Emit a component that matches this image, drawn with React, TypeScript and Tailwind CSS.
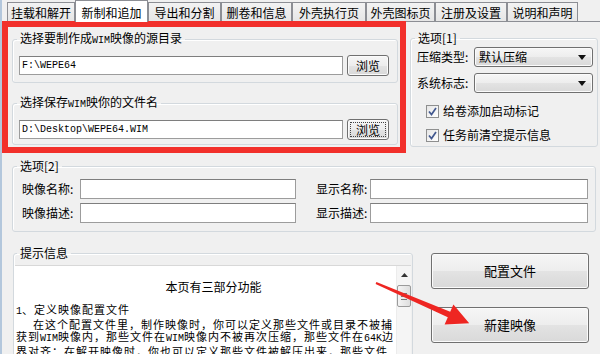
import React from "react";

const tabs = [
  { label: "挂载和解开", w: "w-[68px]" },
  { label: "新制和追加", w: "w-[73px]", active: true },
  { label: "导出和分割", w: "w-[73px]" },
  { label: "删卷和信息", w: "w-[71px]" },
  { label: "外壳执行页", w: "w-[74px]" },
  { label: "外壳图标页", w: "w-[69px]" },
  { label: "注册及设置", w: "w-[72px]" },
  { label: "说明和声明", w: "w-[71px]" },
];

const face =
  "rounded-[3px] border border-[#707070] shadow-[inset_0_0_0_1px_#fbfbfb] bg-[linear-gradient(to_bottom,#f6f6f6_0%,#ededed_50%,#e3e3e3_51%,#d9d9d9_100%)]";
const btn = `flex items-center justify-center ${face}`;

const input =
  "flex items-center bg-white border border-[#9c9c9c] border-t-[#7e7e7e] pl-[2px] font-['Liberation_Mono',monospace] text-[10px]";

const group = "border border-[#d3d9de] rounded-[3px] shadow-[inset_1px_1px_0_#ffffff]";

// narrow latin runs, like the bitmap font in the original
function W({ children }: { children: React.ReactNode }) {
  return <span className="font-['Liberation_Mono',monospace] text-[10px] tracking-normal">{children}</span>;
}

function Caret() {
  return (
    <svg width="8" height="5" viewBox="0 0 8 5">
      <path d="M0 0 H8 L4 5 Z" fill="#111" />
    </svg>
  );
}

function Combo({ label, value }: { label: string; value?: string }) {
  return (
    <div className="flex items-center pl-[6px]">
      <span className="w-[57px]">{label}</span>
      <div className={`${face} flex h-[20px] w-[119px] items-center justify-between pl-[4px] pr-[6px]`}>
        <span>{value}</span>
        <Caret />
      </div>
    </div>
  );
}

function Check({ label }: { label: string }) {
  return (
    <div className="flex items-center gap-[4px] pl-[15px]">
      <div className="flex h-[13px] w-[13px] items-center justify-center border border-[#8e8f8f] bg-[linear-gradient(135deg,#e6e6e6,#ffffff)]">
        <svg width="11" height="11" viewBox="0 0 11 11">
          <path d="M2 5.5 L4.5 8.5 L9 2" fill="none" stroke="#42588f" strokeWidth="1.7" />
        </svg>
      </div>
      <span>{label}</span>
    </div>
  );
}

function PathRow({ value, focused }: { value: string; focused?: boolean }) {
  return (
    <div className="mt-[6px] flex items-center gap-[4px] pl-[6px]">
      <div className={`${input} h-[19px] w-[324px]`}>{value}</div>
      <div className={`${btn} h-[21px] w-[42px] ${focused ? "p-[2px]" : ""}`}>
        {focused ? (
          <span className="flex h-full w-full items-center justify-center border border-dotted border-[#444]">
            浏览
          </span>
        ) : (
          "浏览"
        )}
      </div>
    </div>
  );
}

function Field({ children }: { children: React.ReactNode }) {
  return <legend className="ml-[4px] px-[3px]">{children}</legend>;
}

export default function App() {
  return (
    <div className="relative h-[354px] w-[600px] overflow-hidden border-l-[2px] border-[#b3c7dc] bg-[#f0f0f0] text-[12px] leading-[16px] text-black font-['Noto_Sans_CJK_SC','Noto_Sans',sans-serif]">
      {/* tabs */}
      <div className="flex h-[22px] items-end border-b border-[#8c8e94] pl-[5px]">
        {tabs.map((t) =>
          t.active ? (
            <div
              key={t.label}
              className={`${t.w} relative z-10 -mb-px flex h-[22px] items-center justify-center border border-b-0 border-[#8c8e94] bg-white pt-[2px]`}
            >
              {t.label}
            </div>
          ) : (
            <div
              key={t.label}
              className={`${t.w} flex h-[19px] items-center justify-center border border-b-0 border-[#8c8e94] bg-[linear-gradient(to_bottom,#f3f3f3,#e6e6e6)] pt-[2px]`}
            >
              {t.label}
            </div>
          )
        )}
      </div>

      {/* row 1 */}
      <div className="flex">
        <div className="-mt-px flex h-[132px] w-[404px] flex-col border-[6px] border-[#f2302b] px-[4px] pt-[3px]">
          <fieldset className={`${group} h-[53px] w-[386px]`}>
            <Field>
              选择要制作成<W>WIM</W>映像的源目录
            </Field>
            <PathRow value="F:\WEPE64" />
          </fieldset>
          <fieldset className={`${group} mt-[11px] h-[51px] w-[386px]`}>
            <Field>
              选择保存<W>WIM</W>映你的文件名
            </Field>
            <PathRow value="D:\Desktop\WEPE64.WIM" focused />
          </fieldset>
        </div>

        <fieldset className={`${group} ml-[4px] mt-[8px] h-[117px] w-[188px]`}>
          <Field>选项[1]</Field>
          <div className="mt-[1px]">
            <Combo label="压缩类型:" value="默认压缩" />
          </div>
          <div className="mt-[6px]">
            <Combo label="系统标志:" />
          </div>
          <div className="mt-[10px]">
            <Check label="给卷添加启动标记" />
          </div>
          <div className="mt-[8px]">
            <Check label="任务前清空提示信息" />
          </div>
        </fieldset>
      </div>

      {/* row 2 */}
      <fieldset className={`${group} ml-[10px] mt-[5px] h-[74px] w-[584px]`}>
        <Field>选项[2]</Field>
        <div className="mt-[5px] flex flex-col gap-[4px] pl-[9px]">
          {[
            ["映像名称:", "显示名称:"],
            ["映像描述:", "显示描述:"],
          ].map(([a, b]) => (
            <div key={a} className="flex items-center">
              <span className="w-[58px]">{a}</span>
              <div className={`${input} h-[20px] w-[216px]`} />
              <span className="ml-[20px] w-[54px]">{b}</span>
              <div className={`${input} h-[20px] w-[218px]`} />
            </div>
          ))}
        </div>
      </fieldset>

      {/* row 3 */}
      <div className="mt-[13px] flex items-start">
        <fieldset className={`${group} ml-[11px] h-[130px] w-[400px]`}>
          <legend className="ml-[3px] px-[3px]">提示信息</legend>
          <div className="ml-[1px] mt-[4px] flex h-[110px] w-[396px] border-t border-[#d8d8d8] bg-white">
            <div className="flex-1 overflow-hidden whitespace-nowrap text-[11px] leading-[12px] tracking-[1px]">
              <div className="mt-[13px] pl-[16px] text-center text-[12px] leading-[16px] tracking-normal">
                本页有三部分功能
              </div>
              <div className="mt-[8px] pl-[1px]">
                <W>1</W>、定义映像配置文件
              </div>
              <div className="pl-[18px]">在这个配置文件里，制作映像时，你可以定义那些文件或目录不被捕</div>
              <div className="pl-[1px]">
                获到<W>WIM</W>映像内，那些文件在<W>WIM</W>映像内不被再次压缩，那些文件在<W>64K</W>边
              </div>
              <div className="pl-[1px]">界对齐；在解开映像时，你也可以定义那些文件被解压出来，那些文件</div>
              <div className="pl-[1px]">不被解压出来。这个配置文件的格式见下面，一般情况下，你可以使用</div>
            </div>
            <div className="flex w-[15px] flex-col items-center border-l border-[#ececec] bg-[#f5f5f5]">
              <div className="flex h-[17px] items-center justify-center">
                <svg width="7" height="4" viewBox="0 0 7 4">
                  <path d="M0 4 L3.5 0 L7 4 Z" fill="#333" />
                </svg>
              </div>
              <div className="mt-[2px] flex h-[22px] w-[14px] flex-col items-center justify-center gap-[2px] rounded-[2px] border border-[#9b9b9b] bg-[linear-gradient(to_right,#f4f4f4,#dedede)]">
                <div className="h-px w-[6px] bg-[#777]" />
                <div className="h-px w-[6px] bg-[#777]" />
                <div className="h-px w-[6px] bg-[#777]" />
              </div>
            </div>
          </div>
        </fieldset>

        <div className="ml-[18px] mt-[8px] flex w-[158px] flex-col gap-[18px] text-[13px]">
          <div className={`${btn} h-[36px]`}>配置文件</div>
          <div className={`${btn} h-[36px]`}>新建映像</div>
        </div>
      </div>

      {/* annotation arrow */}
      <svg
        className="pointer-events-none absolute left-[-2px] top-0"
        width="600"
        height="354"
        viewBox="0 0 600 354"
      >
        <polygon
          points="376.4,282.1 450.2,311.8 453.4,304.4 469.2,323.3 444.6,324.6 447.8,317.3 375.6,283.9"
          fill="#ee2622"
        />
      </svg>
    </div>
  );
}
